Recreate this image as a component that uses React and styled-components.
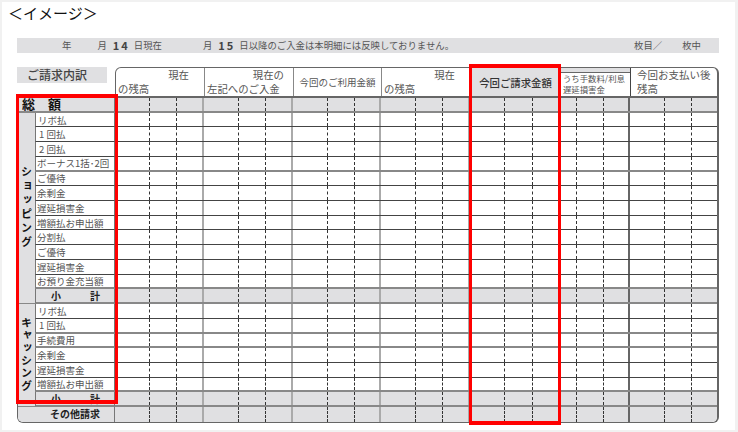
import React from 'react';
import styled, { createGlobalStyle } from 'styled-components';

const FONT = '"Noto Sans CJK JP", "Noto Sans", sans-serif';
const SHADE = '#e0e0e2';

const Global = createGlobalStyle`
  html, body { margin: 0; padding: 0; background: #f1f1f1; }
  * { box-sizing: border-box; }
`;

const Page = styled.div`
  width: 738px;
  height: 432px;
  padding: 2px 3px 2px 2px;
  font-family: ${FONT};
  color: #555;
  overflow: hidden;
`;
const Sheet = styled.div`
  height: 100%;
  background: #fff;
  padding: 0 15px 0 15px;
`;
const Title = styled.h1`
  margin: 0 0 0 -9px;
  height: 36px;
  font-size: 15px;
  line-height: 21px;
  font-weight: 400;
  color: #111;
`;
const InfoBar = styled.div`
  display: flex;
  align-items: center;
  height: 15px;
  width: 702px;
  background: ${SHADE};
  font-size: 9.4px;
  line-height: 15px;
  white-space: nowrap;
`;
const InfoText = styled.span`
  margin-left: ${p => p.$gap}px;
`;
const InfoNum = styled.b`
  margin-left: ${p => p.$gap}px;
  font-size: 11px;
  letter-spacing: 2px;
  font-weight: 700;
  color: #444;
`;

const Ledger = styled.div`
  position: relative;
  width: 702px;
  margin-top: 14px;
`;
const Head = styled.div`
  display: flex;
  height: 31px;
`;
const HeadLeft = styled.div`
  width: 98px;
  flex: none;
`;
const SummaryTitle = styled.div`
  width: 90px;
  height: 16px;
  background: ${SHADE};
  font-size: 12px;
  line-height: 16px;
  padding-left: 10px;
  font-weight: 500;
  color: #444;
`;
const HeadCols = styled.div`
  flex: 1;
  display: grid;
  grid-template-columns: 89px 89px 88px 89px 90px 70px 87px;
  border: 1px solid #666;
  border-width: 1px 2px 2px 1px;
  border-radius: 6px 6px 0 0;
  overflow: hidden;
`;
const HeadCell = styled.div`
  display: flex;
  flex-direction: column;
  justify-content: space-between;
  padding: 0 0 0 2px;
  font-size: 10.4px;
  line-height: 14px;
  border-right: 1px solid #888;
  white-space: nowrap;
`;
const HeadTop = styled.span`
  align-self: flex-end;
  padding-right: ${p => p.$pad}px;
`;
const HeadCenter = styled.div`
  display: flex;
  align-items: center;
  justify-content: center;
  font-size: ${p => p.$size}px;
  font-weight: ${p => p.$weight || 400};
  color: ${p => p.$color || '#555'};
  background: ${p => p.$bg || 'transparent'};
  border-right: 1px solid #888;
  white-space: nowrap;
`;
const HeadSplit = styled.div`
  display: flex;
  flex-direction: column;
  border-right: 1px solid #444;
`;
const HeadBand = styled.div`
  height: 5px;
  background: ${SHADE};
  border-bottom: 1px solid #666;
`;
const HeadSmall = styled.div`
  padding: 0 0 0 2px;
  font-size: 8.4px;
  line-height: 11px;
  white-space: nowrap;
`;
const HeadPlain = styled.div`
  display: flex;
  flex-direction: column;
  padding: 0 0 0 6px;
  font-size: 10.5px;
  line-height: 14px;
  white-space: nowrap;
`;

const Body = styled.div`
  display: grid;
  grid-template-columns: 17px 80px 602px;
  grid-template-rows: repeat(22, 14.73px);
  border: 1px solid #666;
  border-width: 0 2px 1px 1px;
  border-radius: 0 0 6px 6px;
`;
const Line = p => (p.$thick ? '2px solid #888' : '1px solid #444');
const Side = styled.div`
  grid-row: span ${p => p.$span};
  display: flex;
  align-items: center;
  justify-content: center;
  background: ${SHADE};
  border-bottom: 1px solid #888;
  writing-mode: vertical-rl;
  font-size: 11px;
  font-weight: 700;
  color: #111;
  letter-spacing: ${p => p.$spacing}px;
  white-space: nowrap;
`;
const Label = styled.div`
  display: flex;
  align-items: center;
  padding-left: ${p => p.$indent || 1}px;
  font-size: 9.5px;
  line-height: 12px;
  white-space: nowrap;
  color: #555;
  border-bottom: ${Line};
  border-left: 1px solid #777;
  border-right: 1px solid #777;
`;
const SubTotal = styled.div`
  display: flex;
  justify-content: space-between;
  align-items: center;
  padding: 0 14px 0 15px;
  background: ${SHADE};
  font-size: 10px;
  line-height: 12px;
  font-weight: 700;
  color: #222;
  border-bottom: ${Line};
  border-left: 1px solid #777;
  border-right: 1px solid #777;
`;
const Total = styled.div`
  grid-column: span 2;
  display: flex;
  align-items: center;
  padding-left: 4px;
  background: ${SHADE};
  font-size: 13px;
  line-height: 12px;
  font-weight: 700;
  color: #111;
  white-space: pre;
  border-bottom: ${Line};
  border-right: 1px solid #777;
`;
const Other = styled.div`
  grid-column: span 2;
  display: flex;
  align-items: center;
  padding-left: 32px;
  background: ${SHADE};
  font-size: 10px;
  line-height: 12px;
  font-weight: 700;
  color: #222;
  border-right: 1px solid #777;
  border-bottom-left-radius: 5px;
`;
const Strip = styled.div`
  display: grid;
  grid-template-columns: 89px 89px 88px 89px 90px 70px 87px;
  background: ${p => (p.$shade ? SHADE : '#fff')};
  border-bottom: ${p => (p.$last ? 'none' : Line(p))};
  border-bottom-right-radius: ${p => (p.$last ? 5 : 0)}px;
`;
const Group = styled.div`
  display: grid;
  grid-template-columns: ${p => p.$tracks};
  border-right: ${p => p.$edge};
  &:last-child { border-right: none; }
`;
const Digit = styled.div`
  border-right: 1px dashed #333;
  &:last-child { border-right: none; }
`;
const RedFrame = styled.div`
  position: absolute;
  left: ${p => p.$left}px;
  top: ${p => p.$top}px;
  width: ${p => p.$w}px;
  height: ${p => p.$h}px;
  border: solid #f00;
  border-width: 4px 3px;
  pointer-events: none;
`;

const groups = [
  { tracks: '35px 27px 1fr', edge: '2px solid #aaa' },
  { tracks: '35px 27px 1fr', edge: '2px solid #aaa' },
  { tracks: '35px 27px 1fr', edge: '2px solid #aaa' },
  { tracks: '35px 27px 1fr', edge: '2px solid #aaa' },
  { tracks: '35px 28px 1fr', edge: '2px solid #aaa' },
  { tracks: '17px 27px 1fr', edge: '2px solid #666' },
  { tracks: '35px 27px 1fr', edge: 'none' },
];

const Amounts = ({ shade, thick, last }) => (
  <Strip $shade={shade} $thick={thick} $last={last}>
    {groups.map((g, i) => (
      <Group key={i} $tracks={g.tracks} $edge={g.edge}>
        <Digit />
        <Digit />
        <Digit />
      </Group>
    ))}
  </Strip>
);

const Row = ({ text, thick, indent }) => (
  <>
    <Label $thick={thick} $indent={indent}>{text}</Label>
    <Amounts thick={thick} />
  </>
);

const Sub = ({ thick }) => (
  <>
    <SubTotal $thick={thick}><span>小</span><span>計</span></SubTotal>
    <Amounts shade thick={thick} />
  </>
);

export default function App() {
  return (
    <Page>
      <Global />
      <Sheet>
        <Title>＜イメージ＞</Title>
        <InfoBar>
          <InfoText $gap={45}>年</InfoText>
          <InfoText $gap={26}>月</InfoText>
          <InfoNum $gap={6}>14</InfoNum>
          <InfoText $gap={4}>日現在</InfoText>
          <InfoText $gap={41}>月</InfoText>
          <InfoNum $gap={6}>15</InfoNum>
          <InfoText $gap={4}>日以降のご入金は本明細には反映しておりません。</InfoText>
          <InfoText $gap={180}>枚目／</InfoText>
          <InfoText $gap={20}>枚中</InfoText>
        </InfoBar>
        <Ledger>
          <Head>
            <HeadLeft><SummaryTitle>ご請求内訳</SummaryTitle></HeadLeft>
            <HeadCols>
              <HeadCell><HeadTop $pad={15}>現在</HeadTop><span>の残高</span></HeadCell>
              <HeadCell><HeadTop $pad={9}>現在の</HeadTop><span>左記へのご入金</span></HeadCell>
              <HeadCenter $size={9.5}>今回のご利用金額</HeadCenter>
              <HeadCell><HeadTop $pad={15}>現在</HeadTop><span>の残高</span></HeadCell>
              <HeadCenter $size={10.4} $bg={SHADE} $weight={500} $color="#333">今回ご請求金額</HeadCenter>
              <HeadSplit>
                <HeadBand />
                <HeadSmall>うち手数料/利息<br />遅延損害金</HeadSmall>
              </HeadSplit>
              <HeadPlain><span>今回お支払い後</span><span>残高</span></HeadPlain>
            </HeadCols>
          </Head>
          <Body>
            <Total $thick>{'総　額'}</Total>
            <Amounts shade thick />
            <Side $span={13} $spacing={3}>ショッピング</Side>
            <Row text="リボ払" indent={2} />
            <Row text="1 回払" indent={3} />
            <Row text="2 回払" indent={3} />
            <Row text="ボーナス1括･2回" thick />
            <Row text="ご優待" />
            <Row text="余剰金" />
            <Row text="遅延損害金" />
            <Row text="増額払お申出額" />
            <Row text="分割払" />
            <Row text="ご優待" />
            <Row text="遅延損害金" />
            <Row text="お預り金充当額" thick />
            <Sub thick />
            <Side $span={7} $spacing={1.7}>キャッシング</Side>
            <Row text="リボ払" indent={2} />
            <Row text="1 回払" indent={3} thick />
            <Row text="手続費用" thick />
            <Row text="余剰金" />
            <Row text="遅延損害金" />
            <Row text="増額払お申出額" thick />
            <Sub thick />
            <Other>その他請求</Other>
            <Amounts shade last />
          </Body>
          <RedFrame $left={-1} $top={27} $w={102} $h={310} />
          <RedFrame $left={452} $top={-3} $w={92} $h={361} />
        </Ledger>
      </Sheet>
    </Page>
  );
}
